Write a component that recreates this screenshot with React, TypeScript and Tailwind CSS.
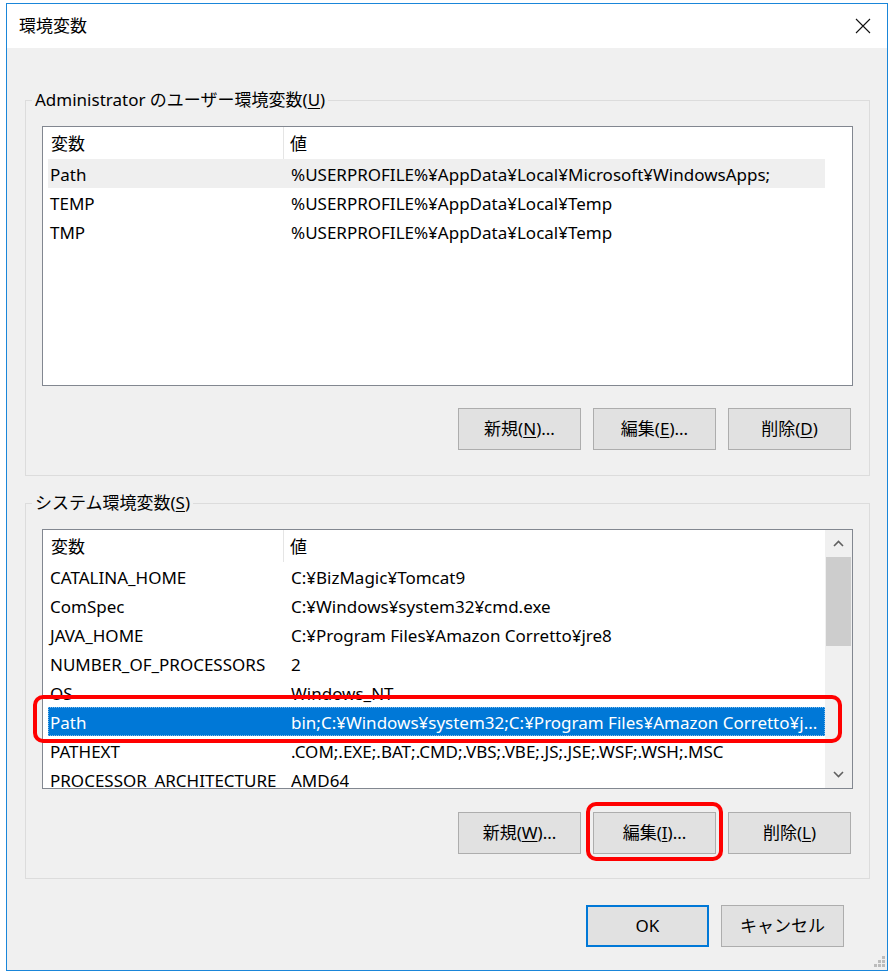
import React from 'react';

interface EnvVar {
    name: string;
    value: string;
}

const userVars: EnvVar[] = [
    { name: 'Path', value: '%USERPROFILE%¥AppData¥Local¥Microsoft¥WindowsApps;' },
    { name: 'TEMP', value: '%USERPROFILE%¥AppData¥Local¥Temp' },
    { name: 'TMP', value: '%USERPROFILE%¥AppData¥Local¥Temp' },
];

const systemVars: EnvVar[] = [
    { name: 'CATALINA_HOME', value: 'C:¥BizMagic¥Tomcat9' },
    { name: 'ComSpec', value: 'C:¥Windows¥system32¥cmd.exe' },
    { name: 'JAVA_HOME', value: 'C:¥Program Files¥Amazon Corretto¥jre8' },
    { name: 'NUMBER_OF_PROCESSORS', value: '2' },
    { name: 'OS', value: 'Windows_NT' },
    { name: 'Path', value: 'bin;C:¥Windows¥system32;C:¥Program Files¥Amazon Corretto¥j...' },
    { name: 'PATHEXT', value: '.COM;.EXE;.BAT;.CMD;.VBS;.VBE;.JS;.JSE;.WSF;.WSH;.MSC' },
    { name: 'PROCESSOR_ARCHITECTURE', value: 'AMD64' },
];

// access key label, e.g. 新規(N)...
const Key = ({ pre, k, post }: { pre: string; k: string; post: string }) => (
    <span>
        {pre}(<span className="underline underline-offset-2">{k}</span>){post}
    </span>
);

const Button = ({ children, primary }: { children: React.ReactNode; primary?: boolean }) => (
    <div
        className={
            primary
                ? 'flex h-[42px] w-[123px] items-center justify-center border-2 border-[#0078d7] bg-[#e1e1e1]'
                : 'flex h-[42px] w-[123px] items-center justify-center border border-[#adadad] bg-[#e1e1e1]'
        }
    >
        {children}
    </div>
);

const Chevron = ({ up }: { up?: boolean }) => (
    <svg width="11" height="7" viewBox="0 0 11 7" fill="none">
        <polyline
            points={up ? '1,6 5.5,1.5 10,6' : '1,1 5.5,5.5 10,1'}
            stroke="#606060"
            strokeWidth="1.6"
        />
    </svg>
);

const Scrollbar = () => (
    <div className="flex w-[27px] flex-col bg-[#f0f0f0]">
        <div className="flex h-[27px] items-center justify-center">
            <Chevron up />
        </div>
        <div className="flex-1">
            <div className="mx-[1px] h-[89px] bg-[#cdcdcd]" />
        </div>
        <div className="flex h-[27px] items-center justify-center">
            <Chevron />
        </div>
    </div>
);

const VarList = ({ vars, hover, selected, scroll }: { vars: EnvVar[]; hover?: number; selected?: number; scroll?: boolean }) => (
    <div className="flex h-[260px] overflow-hidden border border-[#828790] bg-white">
        <div className="min-w-0 flex-1 pl-[5px]">
            {/* HEADER */}
            <div className="flex h-[32px] w-[777px] items-center">
                <div className="flex h-full w-[236px] items-center border-r border-[#e5e5e5] pl-[3px] pt-[2px]">変数</div>
                <div className="pl-[6px] pt-[2px]">値</div>
            </div>
            {/* ROWS */}
            {vars.map((v, i) => (
                <div
                    key={v.name}
                    className={
                        i === selected
                            ? 'flex h-[29px] w-[777px] items-center whitespace-nowrap bg-[#0078d7] pt-[2px] text-white outline outline-1 outline-dotted outline-offset-[-1px] outline-[#7fbcec]'
                            : i === hover
                              ? 'flex h-[29px] w-[777px] items-center whitespace-nowrap bg-[#efefef] pt-[2px]'
                              : 'flex h-[29px] w-[777px] items-center whitespace-nowrap pt-[2px]'
                    }
                >
                    <div className="w-[243px] shrink-0 overflow-hidden pl-[2px]">{v.name}</div>
                    <div className="min-w-0 overflow-hidden">{v.value}</div>
                </div>
            ))}
        </div>
        {scroll && <Scrollbar />}
    </div>
);

const Group = ({ label, children, className }: { label: React.ReactNode; children: React.ReactNode; className: string }) => (
    <div className={className}>
        <div className="absolute left-[6px] top-[-12px] bg-[#f0f0f0] px-[3px] leading-[22px]">{label}</div>
        {children}
    </div>
);

const ResizeGrip = () => (
    <svg className="absolute bottom-[2px] right-[1px]" width="14" height="14" viewBox="0 0 14 14" fill="#bcbcbc">
        <rect x="10" y="2" width="3" height="3" />
        <rect x="6" y="6" width="3" height="3" />
        <rect x="10" y="6" width="3" height="3" />
        <rect x="2" y="10" width="3" height="3" />
        <rect x="6" y="10" width="3" height="3" />
        <rect x="10" y="10" width="3" height="3" />
    </svg>
);

export default function App() {
    return (
        <div className="relative h-[975px] w-[894px] overflow-hidden bg-white pl-[6px] pt-[3px] font-['Noto_Sans','Noto_Sans_CJK_JP',sans-serif] text-[17px] text-black">
            {/* WINDOW */}
            <div className="relative flex h-[968px] w-[882px] flex-col border border-[#1a86d9] bg-[#f0f0f0]">
                {/* TITLE BAR */}
                <div className="flex h-[44px] items-center justify-between bg-white pl-[12px] pr-[16px]">
                    <span>環境変数</span>
                    <svg width="16" height="16" viewBox="0 0 16 16">
                        <path d="M1 1 L15 15 M15 1 L1 15" stroke="#111" strokeWidth="1.1" />
                    </svg>
                </div>

                {/* USER VARIABLES */}
                <Group
                    className="relative ml-[18px] mr-[17px] mt-[52px] flex h-[376px] flex-col border border-[#dcdcdc] px-[16px] pt-[25px]"
                    label={<Key pre="Administrator のユーザー環境変数" k="U" post="" />}
                >
                    <VarList vars={userVars} hover={0} />
                    <div className="mr-[2px] mt-[22px] flex justify-end gap-[12px]">
                        <Button><Key pre="新規" k="N" post="..." /></Button>
                        <Button><Key pre="編集" k="E" post="..." /></Button>
                        <Button><Key pre="削除" k="D" post="" /></Button>
                    </div>
                </Group>

                {/* SYSTEM VARIABLES */}
                <Group
                    className="relative ml-[18px] mr-[17px] mt-[27px] flex h-[376px] flex-col border border-[#dcdcdc] px-[16px] pt-[25px]"
                    label={<Key pre="システム環境変数" k="S" post="" />}
                >
                    <VarList vars={systemVars} selected={5} scroll />
                    <div className="mr-[2px] mt-[23px] flex justify-end gap-[12px]">
                        <Button><Key pre="新規" k="W" post="..." /></Button>
                        <Button><Key pre="編集" k="I" post="..." /></Button>
                        <Button><Key pre="削除" k="L" post="" /></Button>
                    </div>
                </Group>

                {/* OK / CANCEL */}
                <div className="mr-[43px] mt-[26px] flex justify-end gap-[12px]">
                    <Button primary>OK</Button>
                    <Button>キャンセル</Button>
                </div>

                <ResizeGrip />
            </div>

            {/* RED HIGHLIGHTS */}
            <div className="absolute left-[33px] top-[695px] h-[48px] w-[809px] rounded-[10px] border-4 border-[#f00]" />
            <div className="absolute left-[586px] top-[802px] h-[59px] w-[137px] rounded-[10px] border-4 border-[#f00]" />
        </div>
    );
}
